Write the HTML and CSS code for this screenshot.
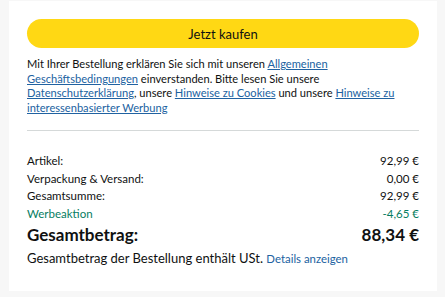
FILE: index.html
```html
<!DOCTYPE html>
<html lang="de">
<head>
<meta charset="utf-8">
<link rel="stylesheet" href="styles.css">
</head>
<body>
<div class="card">
  <button class="buy">Jetzt kaufen</button>
  <p class="legal">Mit Ihrer Bestellung erklären Sie sich mit unseren <a href="#">Allgemeinen Geschäftsbedingungen</a> einverstanden. Bitte lesen Sie unsere <a href="#">Datenschutzerklärung</a>, unsere <a href="#">Hinweise zu Cookies</a> und unsere <a href="#">Hinweise zu interessenbasierter Werbung</a></p>
  <hr class="divider">
  <div class="rows">
    <div class="row"><span>Artikel:</span><span>92,99 €</span></div>
    <div class="row"><span>Verpackung &amp; Versand:</span><span>0,00 €</span></div>
    <div class="row"><span>Gesamtsumme:</span><span>92,99 €</span></div>
    <div class="row promo"><span>Werbeaktion</span><span>-4,65 €</span></div>
  </div>
  <div class="total"><span>Gesamtbetrag:</span><span>88,34 €</span></div>
  <p class="vat">Gesamtbetrag der Bestellung enthält USt. <a href="#">Details anzeigen</a></p>
</div>
</body>
</html>
```
FILE: styles.css
```css
html, body { margin: 0; padding: 0; }
body {
  background: #f7f7f7;
  font-family: Lato, "Noto Sans", Arial, sans-serif;
  color: #0f1111;
  padding: 1px 8px 8px 9px;
}
.card {
  background: #fff;
  width: 392px;
  padding: 18px 18px 21px 18px;
}
.buy {
  display: block;
  width: 100%;
  height: 29px;
  border: none;
  border-radius: 15px;
  background: #ffd814;
  font-family: inherit;
  font-size: 13px;
  color: #0f1111;
  padding: 0;
}
.legal {
  margin: 9px 0 0;
  font-size: 11.1px;
  line-height: 14.5px;
}
.legal a, .vat a { color: #2162a1; }
.divider {
  border: none;
  border-top: 1px solid #d5d9d9;
  margin: 15px 0 18px;
}
.rows { display: flex; flex-direction: column; padding-top: 3px; }
.row {
  display: flex;
  justify-content: space-between;
  font-size: 11.5px;
  line-height: 17.5px;
}
.promo { color: #067d62; }
.total {
  display: flex;
  justify-content: space-between;
  font-weight: 700;
  font-size: 17px;
  line-height: 24px;
  margin-top: 1px;
}
.vat {
  margin: 0;
  font-size: 13px;
  line-height: 22px;
}
.vat a { font-size: 11.4px; text-decoration: none; }
```
